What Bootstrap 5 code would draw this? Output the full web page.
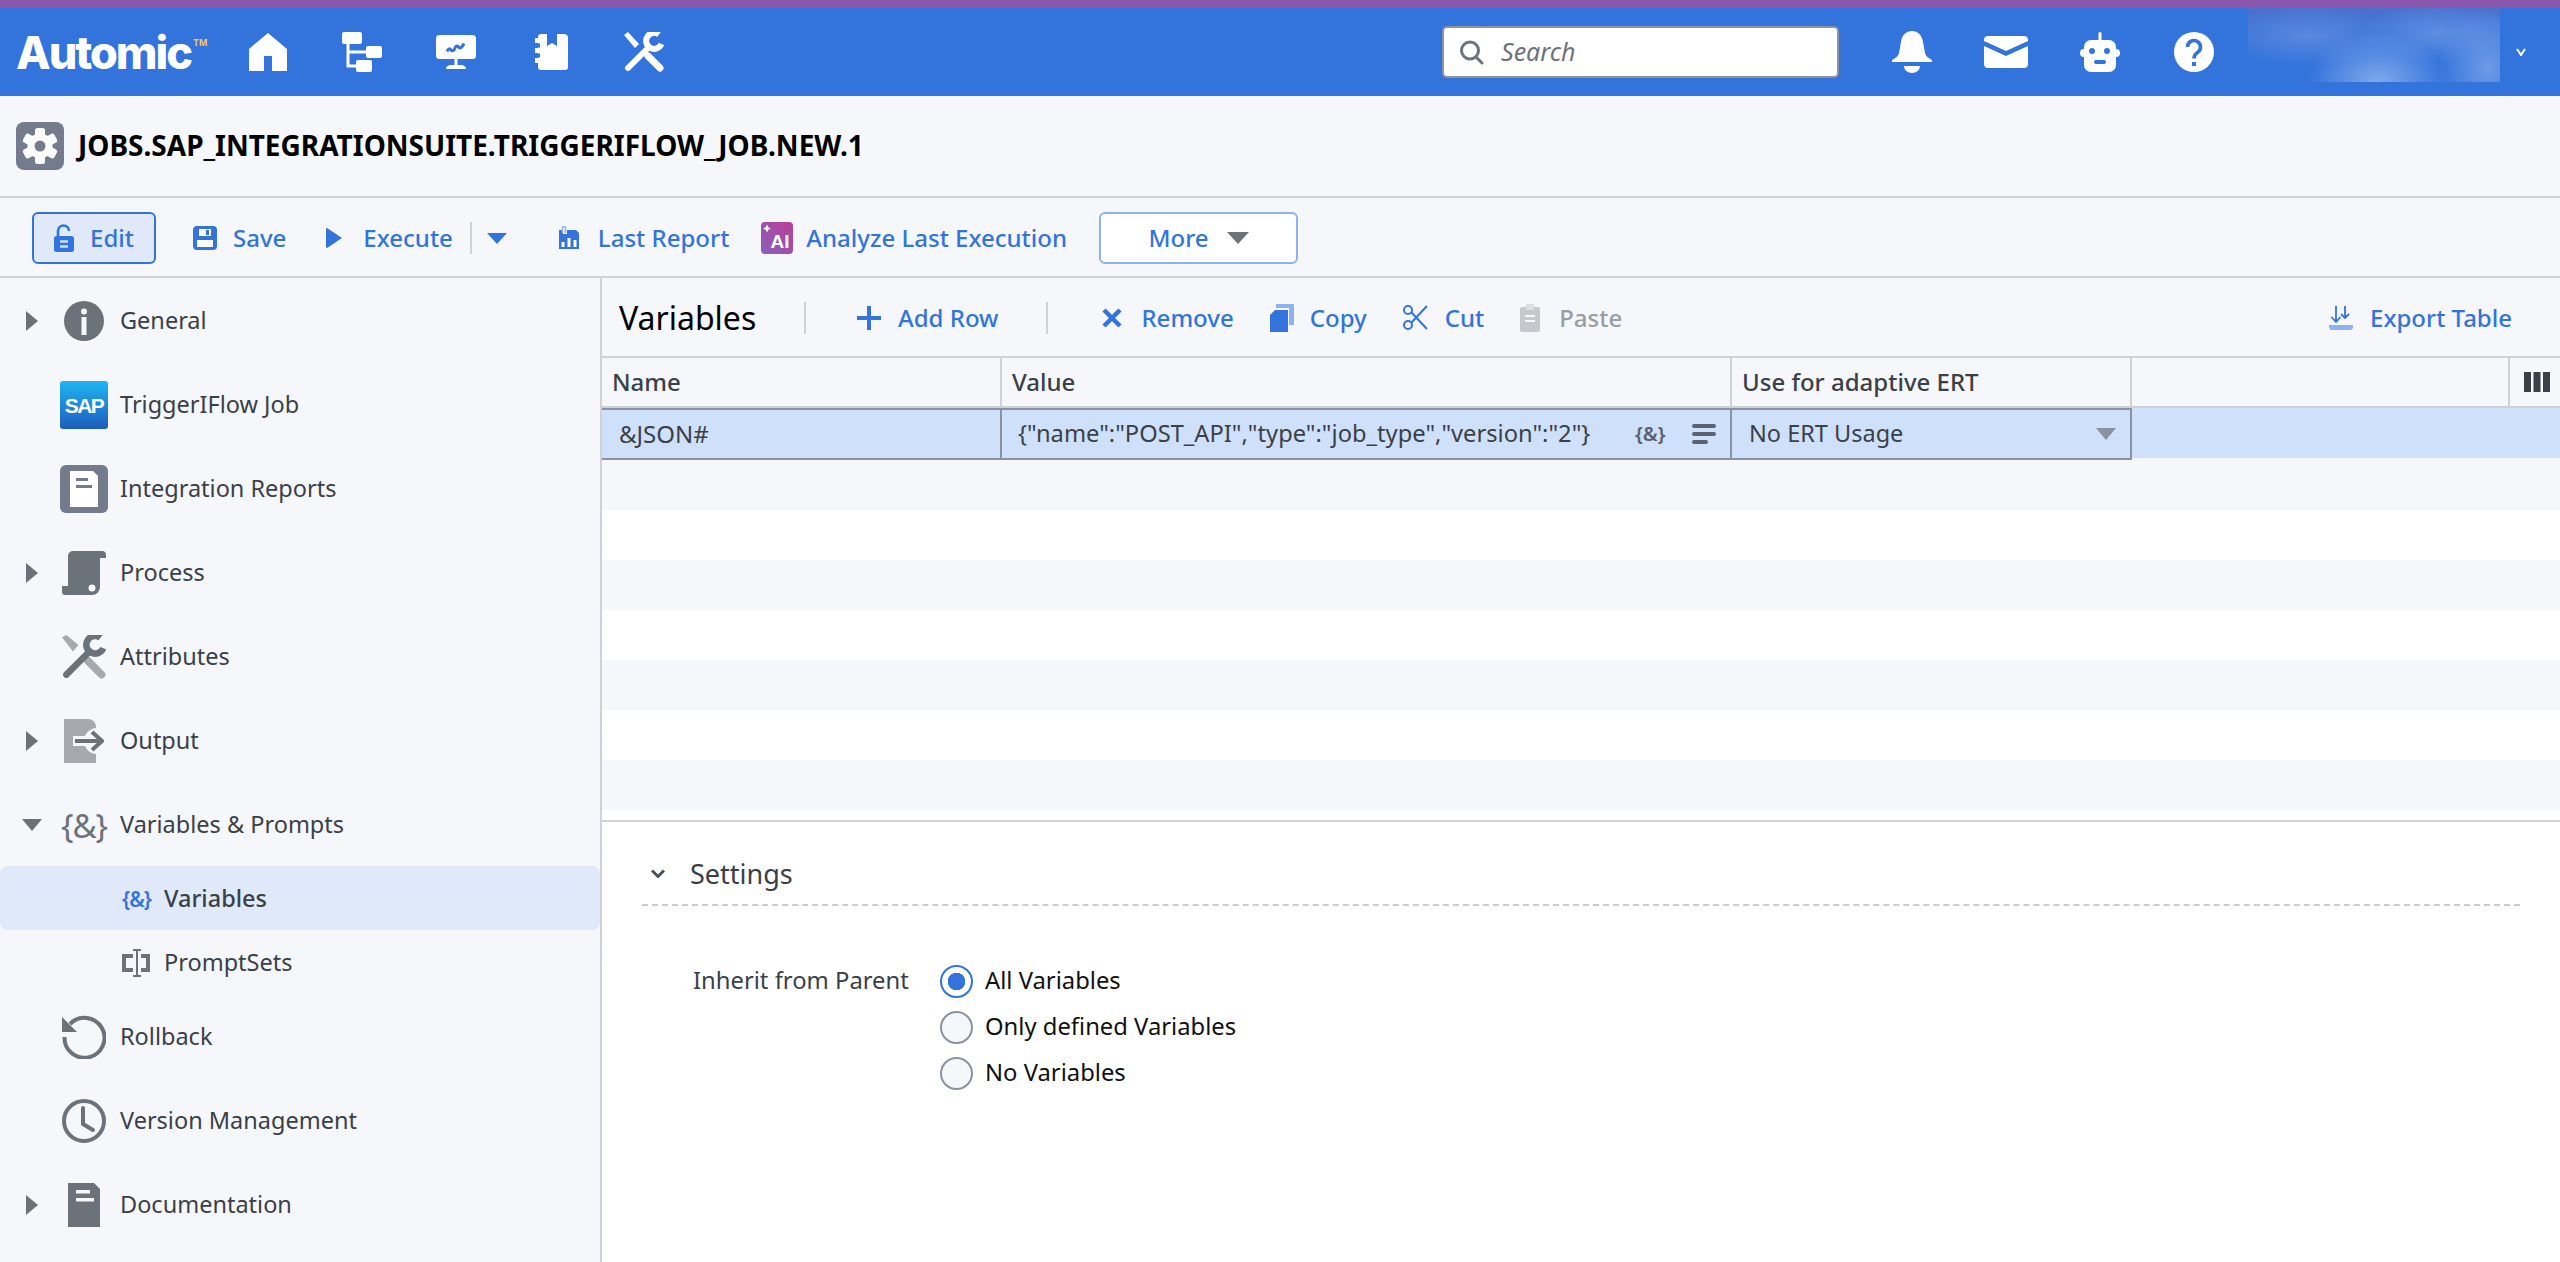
<!DOCTYPE html>
<html lang="en">
<head>
<meta charset="utf-8">
<title>JOBS.SAP_INTEGRATIONSUITE.TRIGGERIFLOW_JOB.NEW.1</title>
<link href="https://cdn.jsdelivr.net/npm/bootstrap@5.3.0/dist/css/bootstrap.min.css" rel="stylesheet">
<style>
:root{--blue:#3373dc;--pagebg:#f5f7fb;--line:#cfd0d8;--dark:#3a4048;--igray:#6c727a;--edge:#8a919f;}
html,body{height:100%;}
body{background:var(--pagebg);font-family:"Noto Sans","Open Sans",sans-serif;color:var(--dark);overflow:hidden;font-size:24px;}
svg{display:block;flex:none;}
.purple-strip{height:8px;background:#8a56ae;}
.topnav{height:88px;background:var(--blue);padding:0 31px 0 16px;flex-wrap:nowrap;justify-content:flex-start;}
.logo-box{width:233px;color:#fff;font-family:"Inter",sans-serif;font-weight:800;font-size:45px;line-height:1;letter-spacing:-2px;display:flex;}
.logo-tm{font-size:9px;color:#f2c94c;letter-spacing:0;margin:8px 0 0 2px;font-weight:700;}
.m55{margin-left:55px}.m54{margin-left:54px}.m59{margin-left:59px}.m56{margin-left:56px}.m53{margin-left:53px}.m52{margin-left:52px}.m34{margin-left:34px}.m13{margin-left:13px}
.search-wrap{width:397px;height:52px;margin-left:auto;background:#fff;border-radius:5px;border:2px solid #8f949c;padding:0 15px;gap:16px;color:#6c727a;font-style:italic;font-size:25px;}
.blur-box{width:252px;height:74px;margin-top:-14px;background:radial-gradient(ellipse 70px 50px at 130px 74px,#7fa8ea,transparent),radial-gradient(ellipse 50px 60px at 240px 60px,#6e9ae6,transparent),radial-gradient(ellipse 90px 30px at 60px 28px,#5a88de,transparent),radial-gradient(ellipse 80px 30px at 190px 25px,#5f8ee2,transparent),linear-gradient(180deg,#4c70c8 0,#3f73d6 22%,#3373dc 60%);}
.title-row{height:102px;border-bottom:2px solid var(--line);padding-left:16px;gap:14px;}
.obj-title{font-size:28px;font-weight:700;color:#000;margin:0;}
.action-row{height:80px;border-bottom:2px solid var(--line);padding:2px 0 0 32px;}
.act-btn{--bs-btn-padding-x:0;--bs-btn-padding-y:0;--bs-btn-border-width:0;--bs-btn-font-size:24px;--bs-btn-color:var(--blue);--bs-btn-hover-color:var(--blue);font-weight:500;display:flex;align-items:center;color:var(--blue);line-height:1.2;}
.act-edit{width:124px;height:52px;border:2px solid var(--blue);background:#e0e9f9;border-radius:6px;justify-content:center;gap:16px;}
.m37{margin-left:37px}.m40{margin-left:40px}.m17{margin-left:17px}.m15{margin-left:15px}.m52b{margin-left:52px}.m32{margin-left:32px}
.g16{gap:16px}.g21{gap:21px}.g19{gap:19px}.g13{gap:13px}
.act-sep{width:2px;height:32px;background:#cfd0d8;}
.act-more{width:199px;height:52px;border:2px solid #8eb2ec;background:#fff;border-radius:6px;justify-content:center;gap:18px;}
.work{flex:1 1 auto;min-height:0;}
.side{width:602px;flex:none;border-right:2px solid var(--line);}
.side-row{--bs-list-group-bg:transparent;border:0;height:84px;padding:2px 0 0 22px;display:flex;align-items:center;background:transparent;color:var(--dark);font-size:23.5px;}
.caret-slot{width:20px;display:flex;justify-content:center;margin-right:18px;}
.icon-slot{width:48px;display:flex;justify-content:center;margin-right:12px;}
.sub-row{height:64px;padding-left:122px;gap:14px;}
.sub-on{background:#e0e9f9;border-radius:8px;font-weight:500;}
.amp-big{font-size:33px;line-height:1;color:var(--igray);letter-spacing:-1px;white-space:nowrap;}
.amp-small{font-size:21px;line-height:1;width:28px;color:var(--blue);font-weight:600;letter-spacing:-1px;white-space:nowrap;}
.panel{flex:1 1 auto;min-width:0;}
.grid-bar{height:80px;flex:none;border-bottom:2px solid var(--line);padding:2px 48px 0 17px;}
.grid-title{font-size:32px;color:#000;margin:0;font-weight:400;width:185px;}
.bar-sep{width:2px;height:32px;background:#cfd0d8;}
.m51{margin-left:51px}.m48{margin-left:48px}.m56b{margin-left:54px}.m36{margin-left:36px}
.g17{gap:17px}.g19b{gap:19px}
.paste-off{color:#9a9da3;}
.grid-area{height:462px;flex:none;background:#fff;}
.vt{table-layout:fixed;width:1958px;margin:0;border-collapse:separate;border-spacing:0;--bs-table-bg:transparent;font-size:24px;}
.vt>thead>tr>th{height:50px;padding:0 0 0 10px;background:var(--pagebg);border:0;border-right:2px solid var(--line);border-bottom:2px solid var(--line);font-weight:500;color:var(--dark);font-size:24px;vertical-align:middle;}
.vt>thead>tr>th:last-child{border-right:0;padding:0 0 0 14px;}
.vt>tbody>tr>td{height:50px;padding:0;border:0;vertical-align:middle;background:#fff;}
.vt>tbody>tr.stripe>td{background:var(--pagebg);}
.vt>tbody>tr.pick>td{height:52px;background:#cfe0fb;border-top:2px solid var(--edge);border-bottom:2px solid var(--edge);border-right:2px solid var(--edge);color:var(--dark);}
.vt>tbody>tr.pick>td.tail{border-top:0;border-right:0;border-bottom:2px solid var(--pagebg);}
.w-name{width:400px}.w-value{width:730px}.w-ert{width:400px}.w-blank{width:378px}.w-cols{width:50px}
.vt>tbody>tr.pick>td.cell-name{padding-left:17px;}
.cell-inner{display:flex;align-items:center;}
.val-text{padding-left:16px;width:633px;white-space:nowrap;font-size:23.7px;}
.amp-cell{font-size:20px;line-height:1;color:#5a6270;width:30px;text-align:center;font-weight:600;white-space:nowrap;margin-right:27px;}
.ert-text{padding-left:17px;flex:1;font-size:23.5px;}
.ert-caret{margin-right:14px;}
.setting-pane{flex:1 1 auto;background:#fff;border-top:2px solid var(--line);padding:0 40px 0 40px;min-height:0;}
.sect-head{height:84px;border-bottom:2px dashed #c9ccd2;padding:22px 0 0 9px;gap:25px;}
.sect-name{font-size:27px;margin:0;font-weight:400;color:var(--dark);}
.radio-block{padding:58px 0 0 51px;}
.radio-lbl{width:247px;font-size:23.8px;line-height:1;height:34px;display:flex;align-items:center;color:var(--dark);}
.pick-list{display:flex;flex-direction:column;gap:12px;}
.pick-line{display:flex;align-items:center;gap:12px;margin:0;padding:0;min-height:0;font-size:23.8px;color:#111;height:34px;}
.pick-line .form-check-input{width:33px;height:33px;margin:0;float:none;background-color:var(--pagebg);border:2px solid var(--edge);}
.pick-line .form-check-input:checked{background-color:#fff;border-color:var(--blue);background-image:radial-gradient(circle,#3373dc 0 8.5px,transparent 9px);}
</style>
</head>
<body class="d-flex flex-column">
<div class="purple-strip flex-none"></div>
<nav class="navbar topnav">
  <div class="logo-box"><span>Automic</span><span class="logo-tm">TM</span></div>
  <svg width="38" height="38" viewBox="0 0 38 38" fill="#fff"><path d="M19 0 38 16V38H23V23H15V38H0V16Z"/></svg>
  <svg class="m55" width="40" height="40" viewBox="0 0 40 40" fill="#fff"><rect width="20" height="12" rx="2"/><rect x="24" y="14" width="16" height="12" rx="2"/><rect x="14" y="28" width="16" height="12" rx="2"/><path d="M6 12V34H14M6 20H24" fill="none" stroke="#fff" stroke-width="3"/></svg>
  <svg class="m54" width="40" height="34" viewBox="0 0 40 34"><rect width="40" height="24" rx="3.500" fill="#fff"/><path d="M18.500 24h3v6h-3zM10 34c0-3 3-4 5-4h10c2 0 5 1 5 4z" fill="#fff"/><path d="M11 16.500c2-4 3-3 4-1.500s3 1 4-2 3-2 4-.5 3 0 5-4" fill="none" stroke="#3373dc" stroke-width="3"/></svg>
  <svg class="m59" width="33" height="36" viewBox="0 0 33 36" fill="#fff"><path d="M3 3a3 3 0 0 1 3-3h6v12l5-3 5 3V0h7a4 4 0 0 1 4 4v29a3 3 0 0 1-3 3H6a3 3 0 0 1-3-3z"/><path d="M0 4h3v5H0zM0 14h3v5H0zM0 24h3v5H0z"/><path d="M3 9.500h2v4H3zM3 19.500h2v4H3z" fill="#3373dc"/></svg>
  <svg class="m56" width="40" height="40" viewBox="0 0 40 40" fill="none" stroke="#fff"><path d="M4 36 25 15" stroke-width="6" stroke-linecap="round"/><path d="M35 2.500A8 8 0 1 0 37.500 12" stroke-width="6"/><path d="M24 24 36 36" stroke-width="7" stroke-linecap="round"/><path d="M0 3 4 0 15 12 11 16Z" fill="#fff" stroke="none"/></svg>
  <div class="search-wrap d-flex align-items-center">
    <svg width="26" height="25" viewBox="0 0 26 25" fill="none" stroke="#6c727a" stroke-width="3"><circle cx="11" cy="10.500" r="8.500"/><path d="m17 17 6 6" stroke-linecap="round"/></svg>
    <span>Search</span>
  </div>
  <svg class="m53" width="40" height="42" viewBox="0 0 40 42" fill="#fff"><path d="M20 0c6 0 10 4 11 11l2 11c1 4 4 5 7 7v2H0v-2c3-2 6-3 7-7l2-11C10 4 14 0 20 0Z"/><path d="M12 35h16a8 7 0 0 1-16 0Z"/></svg>
  <svg class="m52" width="44" height="32" viewBox="0 0 44 32" fill="#fff"><path d="M0 4a4 4 0 0 1 4-4h36a4 4 0 0 1 4 4v1L22 15 0 5Z"/><path d="M0 10 22 20 44 10V28a4 4 0 0 1-4 4H4a4 4 0 0 1-4-4Z"/></svg>
  <svg class="m52" width="40" height="40" viewBox="0 0 40 40"><g fill="#fff"><rect x="18.500" width="3" height="10" rx="1.500"/><rect x="4" y="8" width="32" height="32" rx="7"/><circle cx="4" cy="21" r="4"/><circle cx="36" cy="21" r="4"/></g><g fill="#3373dc"><circle cx="12" cy="19" r="3"/><circle cx="27" cy="19" r="3"/><rect x="14" y="28" width="12" height="4" rx="2"/></g></svg>
  <svg class="m54" width="40" height="40" viewBox="0 0 40 40"><circle cx="20" cy="20" r="20" fill="#fff"/><path d="M13.500 15a6.500 6.500 0 1 1 10 5.500c-2 1.500-3.500 2.500-3.500 6" fill="none" stroke="#3373dc" stroke-width="3.600"/><rect x="18" y="30" width="4" height="4" fill="#3373dc"/></svg>
  <div class="blur-box m34"></div>
  <svg class="m13" width="16" height="8" viewBox="0 0 16 8" fill="none" stroke="#fff" stroke-width="2"><path d="m4 1 4 6 4-6"/></svg>
</nav>

<header class="title-row d-flex align-items-center">
  <svg width="48" height="48" viewBox="0 0 48 48"><rect width="48" height="48" rx="8" fill="#737b8c"/><g fill="#fff"><rect x="19" y="6" width="10" height="36" rx="2.500"/><rect x="19" y="6" width="10" height="36" rx="2.500" transform="rotate(60 24 24)"/><rect x="19" y="6" width="10" height="36" rx="2.500" transform="rotate(120 24 24)"/><circle cx="24" cy="24" r="12.500"/></g><circle cx="24" cy="24" r="5.500" fill="#737b8c"/></svg>
  <h1 class="obj-title">JOBS.SAP_INTEGRATIONSUITE.TRIGGERIFLOW_JOB.NEW.1</h1>
</header>

<div class="action-row d-flex align-items-center">
  <button type="button" class="btn act-btn act-edit">
    <svg width="20" height="28" viewBox="0 0 20 28"><path d="M4 13V7a5.500 5.500 0 0 1 11 0" fill="none" stroke="#3373dc" stroke-width="2.600"/><rect y="12" width="20" height="16" rx="2.500" fill="#3373dc"/><path d="M6 17.500h8M6 22.500h8" stroke="#cfe0fb" stroke-width="2.600"/></svg>
    Edit
  </button>
  <button type="button" class="btn act-btn g16 m37">
    <svg width="24" height="24" viewBox="0 0 24 24"><rect width="24" height="24" rx="4" fill="#3373dc"/><rect x="6" y="3" width="12" height="7" fill="#fff"/><rect x="13" y="4" width="3" height="5" fill="#3373dc"/><rect x="4" y="14" width="16" height="7" fill="#fff"/></svg>
    Save
  </button>
  <button type="button" class="btn act-btn g21 m40">
    <svg width="16" height="20" viewBox="0 0 16 20" fill="#3373dc"><path d="M1 0 16 10 1 20a1 1 0 0 1-1-1V1a1 1 0 0 1 1-1Z"/></svg>
    Execute
  </button>
  <span class="act-sep m17"></span>
  <button type="button" class="btn act-btn m15" aria-label="Execute options">
    <svg width="20" height="11" viewBox="0 0 20 11" fill="#3373dc"><path d="M0 0H20L10 11Z"/></svg>
  </button>
  <button type="button" class="btn act-btn g19 m52b">
    <svg width="20" height="23" viewBox="0 0 20 23"><path d="M0 4h4v4h4V4h9l3 3v16H0z" fill="#3373dc"/><path d="M3.500 7V2a1.500 1.500 0 0 1 3 0v5" fill="none" stroke="#8eb2ec" stroke-width="1.500"/><path d="M2.500 16h3v5h-3zM8.500 12h3v9h-3zM14.500 14h3v7h-3z" fill="#fff"/></svg>
    Last Report
  </button>
  <button type="button" class="btn act-btn g13 m32">
    <svg width="32" height="32" viewBox="0 0 32 32"><defs><linearGradient id="aiGrad" x1="0" y1="1" x2="1" y2="0"><stop offset="0" stop-color="#8a5fbc"/><stop offset="1" stop-color="#b93f96"/></linearGradient></defs><rect width="32" height="32" rx="4" fill="url(#aiGrad)"/><path d="M6 2.500 7.300 5.200 10 6.500 7.300 7.800 6 10.500 4.700 7.800 2 6.500 4.700 5.200Z" fill="#fff"/><text x="19" y="26" text-anchor="middle" font-family="Liberation Sans,sans-serif" font-weight="700" font-size="19" fill="#fff">AI</text></svg>
    Analyze Last Execution
  </button>
  <button type="button" class="btn act-btn act-more m32">
    More
    <svg width="22" height="12" viewBox="0 0 22 12" fill="#6c727a"><path d="M0 0H22L11 12Z"/></svg>
  </button>
</div>

<div class="work d-flex">
  <aside class="side">
    <div class="list-group list-group-flush">
      <a class="list-group-item side-row" href="#"><span class="caret-slot"><svg width="12" height="20" viewBox="0 0 12 20" fill="#6c727a"><path d="M0 0 12 10 0 20Z"/></svg></span><span class="icon-slot"><svg width="40" height="40" viewBox="0 0 40 40"><circle cx="20" cy="20" r="20" fill="#6c727a"/><circle cx="20" cy="10.500" r="3" fill="#f5f7fb"/><rect x="17.500" y="16" width="5" height="18" fill="#f5f7fb"/></svg></span>General</a>
      <a class="list-group-item side-row" href="#"><span class="caret-slot"></span><span class="icon-slot"><svg width="48" height="48" viewBox="0 0 48 48"><defs><linearGradient id="sapGrad" x1="0" y1="0" x2="0" y2="1"><stop offset="0" stop-color="#1fb6f2"/><stop offset="1" stop-color="#1e5cbd"/></linearGradient></defs><rect width="48" height="48" rx="3" fill="url(#sapGrad)"/><text x="24" y="32" text-anchor="middle" font-family="Liberation Sans,sans-serif" font-weight="700" font-size="21" letter-spacing="-1.500" fill="#fff">SAP</text></svg></span>TriggerIFlow Job</a>
      <a class="list-group-item side-row" href="#"><span class="caret-slot"></span><span class="icon-slot"><svg width="48" height="48" viewBox="0 0 48 48"><rect width="48" height="48" rx="6" fill="#737b8c"/><path d="M10 6H33L38 11V42H10Z" fill="#fff"/><path d="M16 13H28V16H16ZM16 20H32V23H16Z" fill="#737b8c"/></svg></span>Integration Reports</a>
      <a class="list-group-item side-row" href="#"><span class="caret-slot"><svg width="12" height="20" viewBox="0 0 12 20" fill="#6c727a"><path d="M0 0 12 10 0 20Z"/></svg></span><span class="icon-slot"><svg width="44" height="44" viewBox="0 0 44 44"><path d="M11 0H40a4 4 0 0 1 4 4v3H38V36a8 8 0 0 1-8 8H3a3 3 0 0 1-3-3V35H6V5a5 5 0 0 1 5-5Z" fill="#6c727a"/><circle cx="30" cy="37" r="3.500" fill="#f5f7fb"/></svg></span>Process</a>
      <a class="list-group-item side-row" href="#"><span class="caret-slot"></span><span class="icon-slot"><svg width="44" height="44" viewBox="0 0 40 40" fill="none"><path d="M23 23 36 36" stroke="#a6a9ae" stroke-width="7" stroke-linecap="round"/><path d="M0 2 4 0 15 9 10 15Z" fill="#a6a9ae"/><path d="M4 36 25 15" stroke="#6c727a" stroke-width="6" stroke-linecap="round"/><path d="M35 2.500A8 8 0 1 0 37.500 12" stroke="#6c727a" stroke-width="6"/></svg></span>Attributes</a>
      <a class="list-group-item side-row" href="#"><span class="caret-slot"><svg width="12" height="20" viewBox="0 0 12 20" fill="#6c727a"><path d="M0 0 12 10 0 20Z"/></svg></span><span class="icon-slot"><svg width="40" height="44" viewBox="0 0 40 44"><path d="M0 0H24a8 8 0 0 1 8 8V44H0Z" fill="#a6a9ae"/><circle cx="33" cy="22" r="13" fill="#f5f7fb"/><rect x="9" y="17" width="22" height="10" fill="#f5f7fb"/><path d="M11 22H37" stroke="#6c727a" stroke-width="4"/><path d="M28 13 38 22 28 31" fill="none" stroke="#6c727a" stroke-width="4"/></svg></span>Output</a>
      <a class="list-group-item side-row" href="#"><span class="caret-slot"><svg width="20" height="12" viewBox="0 0 20 12" fill="#6c727a"><path d="M0 0H20L10 12Z"/></svg></span><span class="icon-slot"><span class="amp-big">{&amp;}</span></span>Variables &amp; Prompts</a>
      <a class="list-group-item side-row sub-row sub-on" href="#"><span class="amp-small">{&amp;}</span>Variables</a>
      <a class="list-group-item side-row sub-row" href="#"><svg width="28" height="28" viewBox="0 0 28 28" fill="none" stroke="#6c727a"><path d="M11 7H2V21H11M19 7H26V21H19" stroke-width="4"/><path d="M11 1H19M15 1V27M11 27H19" stroke-width="2"/></svg>PromptSets</a>
      <a class="list-group-item side-row" href="#"><span class="caret-slot"></span><span class="icon-slot"><svg width="44" height="44" viewBox="0 0 44 44" fill="none"><path d="M8 9A20 20 0 1 1 2.500 22" stroke="#6c727a" stroke-width="4"/><path d="M0 2V17H15Z" fill="#6c727a"/></svg></span>Rollback</a>
      <a class="list-group-item side-row" href="#"><span class="caret-slot"></span><span class="icon-slot"><svg width="44" height="44" viewBox="0 0 44 44" fill="none" stroke="#6c727a" stroke-width="4"><circle cx="22" cy="22" r="20"/><path d="M21 9V25L31 31" stroke-linecap="round"/></svg></span>Version Management</a>
      <a class="list-group-item side-row" href="#"><span class="caret-slot"><svg width="12" height="20" viewBox="0 0 12 20" fill="#6c727a"><path d="M0 0 12 10 0 20Z"/></svg></span><span class="icon-slot"><svg width="32" height="44" viewBox="0 0 32 44"><path d="M0 0H26L32 6V44H0Z" fill="#6c727a"/><path d="M8 7H22V10.500H8ZM8 15H26V18.500H8Z" fill="#f5f7fb"/></svg></span>Documentation</a>
    </div>
  </aside>

  <main class="panel d-flex flex-column">
    <div class="grid-bar d-flex align-items-center">
      <h2 class="grid-title">Variables</h2>
      <span class="bar-sep"></span>
      <button type="button" class="btn act-btn g17 m51"><svg width="24" height="24" viewBox="0 0 24 24" stroke="#3373dc" stroke-width="4"><path d="M12 0V24M0 12H24"/></svg>Add Row</button>
      <span class="bar-sep m48"></span>
      <button type="button" class="btn act-btn g19b m56b"><svg width="20" height="20" viewBox="0 0 20 20" fill="none" stroke="#3373dc" stroke-width="4.500"><path d="M2 2 18 18M18 2 2 18"/></svg>Remove</button>
      <button type="button" class="btn act-btn g16 m36"><svg width="24" height="28" viewBox="0 0 24 28"><path d="M6 0H24V21H19V4H6Z" fill="#8eb2ec"/><path d="M5 6H18V28H0V11Z" fill="#3373dc"/></svg>Copy</button>
      <button type="button" class="btn act-btn g17 m36"><svg width="25" height="25" viewBox="0 0 25 25" fill="none" stroke="#3373dc" stroke-width="2"><circle cx="5" cy="5" r="4"/><circle cx="5" cy="20" r="4"/><path d="M8 7 24 24M8 18 24 1"/></svg>Cut</button>
      <button type="button" class="btn act-btn g19b m36 paste-off"><svg width="20" height="28" viewBox="0 0 20 28"><rect y="3" width="20" height="25" rx="2" fill="#c5c8cd"/><rect x="6" width="8" height="6" fill="#dcdee1"/><path d="M5 12H15M5 17H15" stroke="#f5f7fb" stroke-width="2"/></svg>Paste</button>
      <button type="button" class="btn act-btn g17 ms-auto"><svg width="24" height="24" viewBox="0 0 24 24" fill="none"><path d="M7 0V15M2.500 11 7 16 11.500 11M16 0V11M12 8 16 12 20 8" stroke="#3373dc" stroke-width="1.800"/><path d="M0 19H24V21A3 3 0 0 1 21 24H3A3 3 0 0 1 0 21Z" fill="#8eb2ec"/></svg>Export Table</button>
    </div>

    <div class="grid-area">
      <table class="table vt">
        <colgroup><col class="w-name"><col class="w-value"><col class="w-ert"><col class="w-blank"><col class="w-cols"></colgroup>
        <thead>
          <tr><th>Name</th><th>Value</th><th>Use for adaptive ERT</th><th></th><th><svg width="26" height="20" viewBox="0 0 26 20" fill="#3a4048"><path d="M0 0H7V20H0ZM9.500 0H16.500V20H9.500ZM19 0H26V20H19Z"/></svg></th></tr>
        </thead>
        <tbody>
          <tr class="pick">
            <td class="cell-name">&amp;JSON#</td>
            <td><div class="cell-inner"><span class="val-text">{"name":"POST_API","type":"job_type","version":"2"}</span><span class="amp-cell">{&amp;}</span><svg width="24" height="20" viewBox="0 0 24 20" fill="#5a6270"><rect width="24" height="4" rx="2"/><rect y="8" width="24" height="4" rx="2"/><rect y="16" width="16" height="4" rx="2"/></svg></div></td>
            <td><div class="cell-inner"><span class="ert-text">No ERT Usage</span><svg class="ert-caret" width="20" height="12" viewBox="0 0 20 12" fill="#8a919f"><path d="M0 0H20L10 12Z"/></svg></div></td>
            <td class="tail"></td><td class="tail"></td>
          </tr>
          <tr class="stripe"><td></td><td></td><td></td><td></td><td></td></tr>
          <tr><td></td><td></td><td></td><td></td><td></td></tr>
          <tr class="stripe"><td></td><td></td><td></td><td></td><td></td></tr>
          <tr><td></td><td></td><td></td><td></td><td></td></tr>
          <tr class="stripe"><td></td><td></td><td></td><td></td><td></td></tr>
          <tr><td></td><td></td><td></td><td></td><td></td></tr>
          <tr class="stripe"><td></td><td></td><td></td><td></td><td></td></tr>
        </tbody>
      </table>
    </div>

    <section class="setting-pane">
      <div class="sect-head d-flex align-items-center">
        <svg width="14" height="10" viewBox="0 0 14 10" fill="none" stroke="#4a5058" stroke-width="3"><path d="m1 1.500 6 6 6-6"/></svg>
        <h3 class="sect-name">Settings</h3>
      </div>
      <div class="radio-block d-flex">
        <div class="radio-lbl">Inherit from Parent</div>
        <div class="pick-list">
          <label class="form-check pick-line"><input class="form-check-input" type="radio" name="inh" checked>All Variables</label>
          <label class="form-check pick-line"><input class="form-check-input" type="radio" name="inh">Only defined Variables</label>
          <label class="form-check pick-line"><input class="form-check-input" type="radio" name="inh">No Variables</label>
        </div>
      </div>
    </section>
  </main>
</div>
<script src="https://cdn.jsdelivr.net/npm/bootstrap@5.3.0/dist/js/bootstrap.bundle.min.js"></script>
</body>
</html>
